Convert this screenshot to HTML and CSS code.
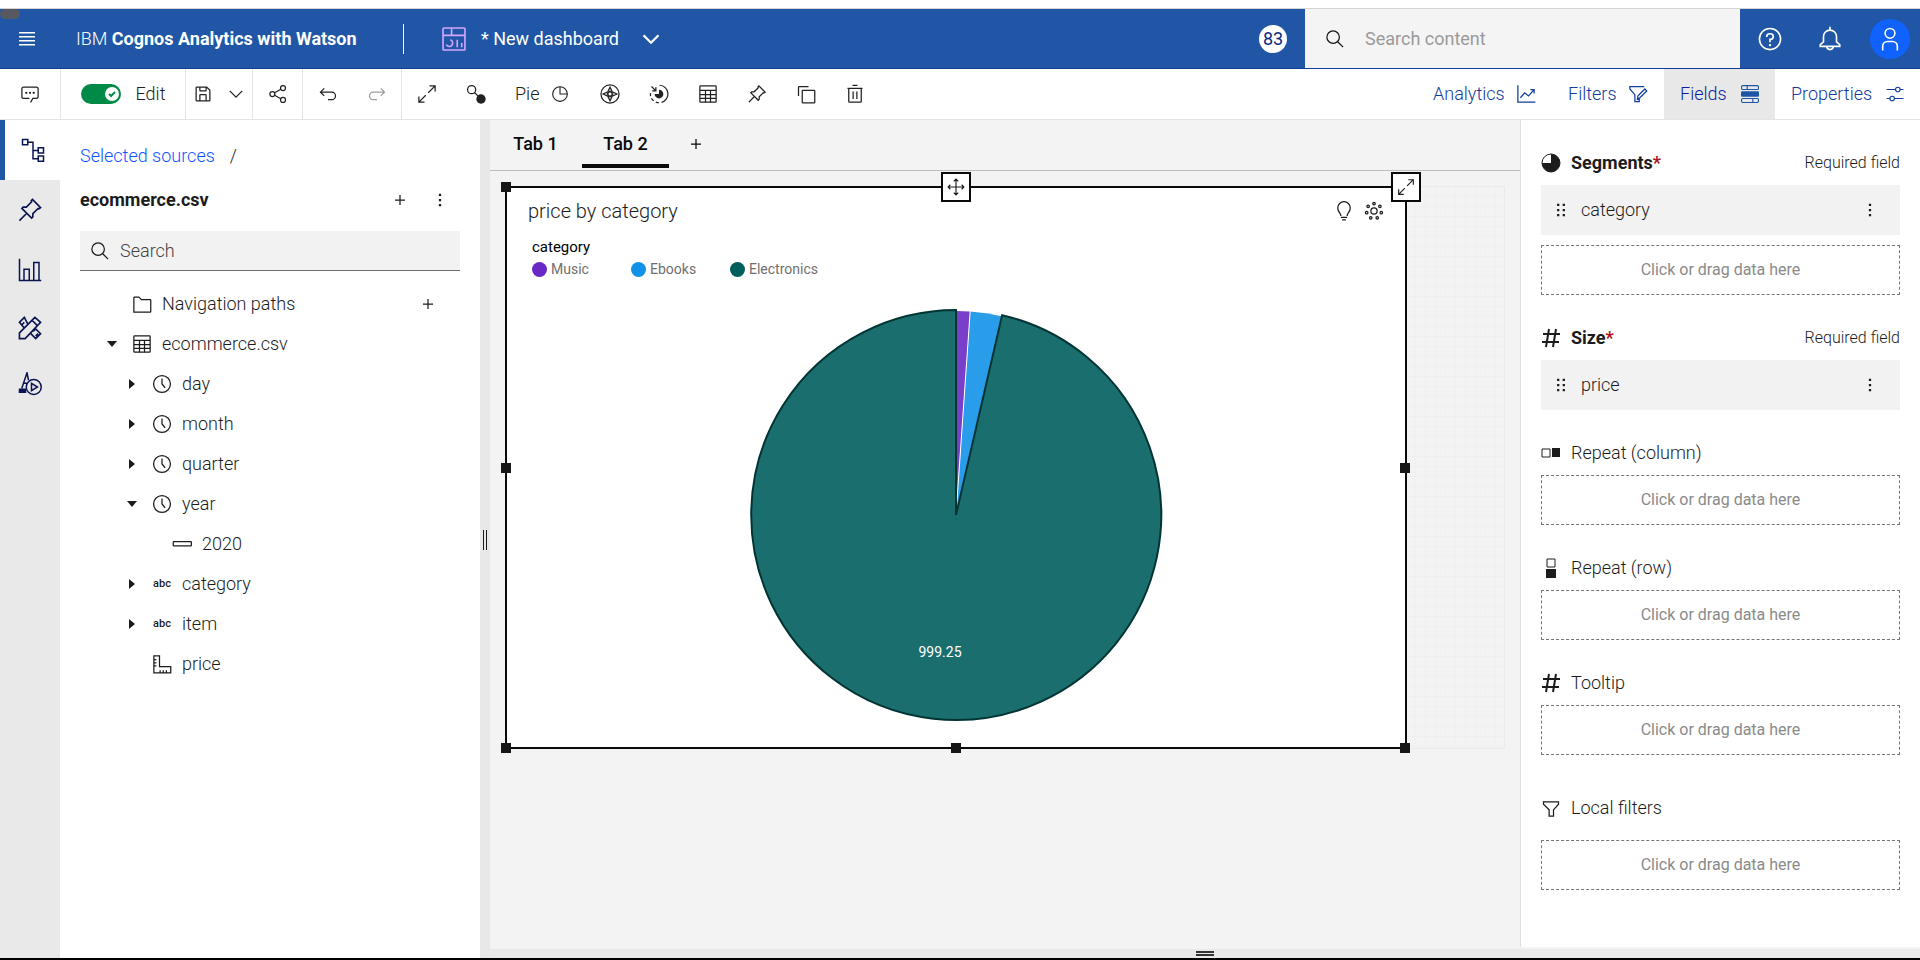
FILE: index.html
```
<!DOCTYPE html>
<html lang="en">
<head>
<meta charset="utf-8">
<title>New dashboard</title>
<link rel="stylesheet" href="styles.css">
</head>
<body>
<svg class="sprite" aria-hidden="true">
  <symbol id="menu" viewBox="0 0 16 16"><path class="solid" d="M0 1h16v1.4H0zM0 5h16v1.4H0zM0 9h16v1.4H0zM0 13h16v1.4H0z"/></symbol>
  <symbol id="dashboard" viewBox="0 0 32 32"><rect x="2.500" y="2.500" width="27" height="27" rx="1"/><path d="M2.500 11.500h27M13 3v8M11.500 17a4.200 4.200 0 1 1-5 6M20 17v9M25.500 21v5"/></symbol>
  <symbol id="chevron" viewBox="0 0 32 32"><path d="M6 11l10 10 10-10"/></symbol>
  <symbol id="search" viewBox="0 0 32 32"><circle cx="13" cy="13" r="10"/><path d="M20.300 20.300L29 29"/></symbol>
  <symbol id="help" viewBox="0 0 32 32"><circle cx="16" cy="16" r="13"/><path d="M12 13.500V13a3.500 3.500 0 0 1 3.500-3.500h1a3.500 3.500 0 0 1 0 7H16V20"/><circle class="solid" cx="16" cy="23.500" r="1.500"/></symbol>
  <symbol id="bell" viewBox="0 0 32 32"><path d="M16 1v4M16 5a8 8 0 0 0-8 8v6.500L4 23v2h24v-2l-4-3.500V13a8 8 0 0 0-8-8zM12 25a4 4 0 0 0 8 0"/></symbol>
  <symbol id="user" viewBox="0 0 32 32"><circle cx="16" cy="9" r="6"/><path d="M7 30v-5a6 6 0 0 1 6-6h6a6 6 0 0 1 6 6v5"/></symbol>
  <symbol id="chat" viewBox="0 0 32 32"><path class="solid" d="M17.740 30L16 29l4-7h6a2 2 0 0 0 2-2V8a2 2 0 0 0-2-2H6a2 2 0 0 0-2 2v12a2 2 0 0 0 2 2h9v2H6a4 4 0 0 1-4-4V8a4 4 0 0 1 4-4h20a4 4 0 0 1 4 4v12a4 4 0 0 1-4 4h-4.840z"/><circle class="solid" cx="10" cy="14" r="1.800"/><circle class="solid" cx="16" cy="14" r="1.800"/><circle class="solid" cx="22" cy="14" r="1.800"/></symbol>
  <symbol id="save" viewBox="0 0 32 32"><path class="solid" d="M27.710 9.290l-5-5A1 1 0 0 0 22 4H6a2 2 0 0 0-2 2v20a2 2 0 0 0 2 2h20a2 2 0 0 0 2-2V10a1 1 0 0 0-.290-.710zM12 6h8v4h-8zm8 20h-8v-8h8zm2 0v-8a2 2 0 0 0-2-2h-8a2 2 0 0 0-2 2v8H6V6h4v4a2 2 0 0 0 2 2h8a2 2 0 0 0 2-2V6.410l4 4V26z"/></symbol>
  <symbol id="share" viewBox="0 0 32 32"><circle cx="7" cy="16" r="4"/><circle cx="24" cy="6.500" r="4"/><circle cx="24" cy="25.500" r="4"/><path d="M10.500 14l10-5.500M10.500 18l10 5.500"/></symbol>
  <symbol id="undo" viewBox="0 0 32 32"><path d="M10 7l-6 6 6 6M4 13h18a6 6 0 0 1 0 12h-6"/></symbol>
  <symbol id="redo" viewBox="0 0 32 32"><path d="M22 7l6 6-6 6M28 13H10a6 6 0 0 0 0 12h6"/></symbol>
  <symbol id="expand" viewBox="0 0 32 32"><path d="M20 3h9v9M29 3L18 14M3 20v9h9M3 29l11-11"/></symbol>
  <symbol id="link" viewBox="0 0 32 32"><circle cx="9" cy="9" r="6.500"/><path d="M13.500 13.500L21 21"/><circle class="solid" cx="24" cy="24" r="7.500"/></symbol>
  <symbol id="pie" viewBox="0 0 32 32"><circle cx="16" cy="16" r="13"/><path d="M16 3v13h13"/></symbol>
  <symbol id="compass" viewBox="0 0 32 32"><circle cx="16" cy="16" r="14.500"/><path d="M16 5l3.500 7.500L27 16l-7.500 3.500L16 27l-3.500-7.500L5 16l7.500-3.500zM16 11.500l4.500 4.500-4.500 4.500-4.500-4.500z"/></symbol>
  <symbol id="explore" viewBox="0 0 32 32"><path d="M17 2a14 14 0 0 1 3 27.500M16 30a14 14 0 0 1-5-1M7.500 27a14 14 0 0 1-3.500-4M2.500 19.500a14 14 0 0 1 0-5M4 4l7 7M11 5v6H5"/><path class="solid" d="M16 9a7 7 0 1 1-7 7h7z"/></symbol>
  <symbol id="table" viewBox="0 0 32 32"><rect x="3" y="3" width="26" height="26" rx="1"/><path d="M3 10h26M3 17h26M3 23h26M12 10v19M20 10v19"/></symbol>
  <symbol id="pin" viewBox="0 0 32 32"><path d="M19 3l10 10-2 1.500-1-.5-6.500 6.500v4L18 26 6 14l1.500-1.500h4L18 6l-.500-1.500zM12 20l-9 9"/></symbol>
  <symbol id="copy" viewBox="0 0 32 32"><rect x="10" y="10" width="20" height="20" rx="1"/><path d="M4 19V5a1 1 0 0 1 1-1h15"/></symbol>
  <symbol id="trash" viewBox="0 0 32 32"><path d="M12 2h8M4 7h24M6 7v21a1 1 0 0 0 1 1h18a1 1 0 0 0 1-1V7M13 12v12M19 12v12"/></symbol>
  <symbol id="analytics" viewBox="0 0 32 32"><path d="M3 2v27h28M7 22l7-8 6 5 9-10M23 9h6v6"/></symbol>
  <symbol id="filteredit" viewBox="0 0 32 32"><path d="M26 4H3v4l8 9v11h7v-5M15 24l1-5L27 8l3 3-11 11z"/></symbol>
  <symbol id="fields" viewBox="0 0 32 32"><rect x="1" y="1" width="30" height="7" rx="2"/><path d="M11 1v7M21 24v7"/><rect class="solid" x="0" y="11" width="32" height="10" rx="2"/><rect x="1" y="24" width="30" height="7" rx="2"/></symbol>
  <symbol id="sliders" viewBox="0 0 32 32"><circle cx="21" cy="8" r="4"/><circle cx="11" cy="24" r="4"/><path d="M1 8h16M25 8h6M1 24h6M15 24h16"/></symbol>
  <symbol id="tree" viewBox="0 0 32 32"><rect x="2" y="2" width="7" height="7"/><rect x="23" y="13" width="7" height="7"/><rect x="23" y="24" width="7" height="7"/><path d="M9 5.500h7v22h7M16 16.500h7"/></symbol>
  <symbol id="chart" viewBox="0 0 32 32"><path d="M2 1v29h29M8 30V15h7v15M21 30V6h7v24"/></symbol>
  <symbol id="tools" viewBox="0 0 32 32"><path d="M3 29v-7L22 3l7 6L10 29zM18.500 6.500l6 6M13.500 11.500L9 3 3 9l6 7M6 12l3-3M20 20l3-3 6 6-6 6-6-6M23 26l3-3"/></symbol>
  <symbol id="media" viewBox="0 0 32 32"><circle cx="21" cy="20" r="10"/><path d="M18 15v10l8-5zM14 11L12 1 5 22M7 15h5"/><path class="solid" d="M1 22h10v6H1z"/></symbol>
  <symbol id="plus" viewBox="0 0 32 32"><path d="M16 8v16M8 16h16"/></symbol>
  <symbol id="dots" viewBox="0 0 32 32"><path class="solid" d="M14 5h4v4h-4zM14 14h4v4h-4zM14 23h4v4h-4z"/></symbol>
  <symbol id="drag" viewBox="0 0 32 32"><path class="solid" d="M9 5h4v4H9zM9 14h4v4H9zM9 23h4v4H9zM19 5h4v4h-4zM19 14h4v4h-4zM19 23h4v4h-4z"/></symbol>
  <symbol id="folder" viewBox="0 0 32 32"><path d="M3 29V6a1 1 0 0 1 1-1h7l4 4h14a1 1 0 0 1 1 1v18a1 1 0 0 1-1 1z"/></symbol>
  <symbol id="clock" viewBox="0 0 32 32"><circle cx="16" cy="16" r="13.500"/><path d="M16 7v9l5 6"/></symbol>
  <symbol id="right" viewBox="0 0 20 20"><path class="solid" d="M7 5l6 5-6 5z"/></symbol>
  <symbol id="down" viewBox="0 0 20 20"><path class="solid" d="M5 7h10l-5 6z"/></symbol>
  <symbol id="member" viewBox="0 0 32 32"><rect x="2" y="12" width="29" height="7" rx="1"/></symbol>
  <symbol id="ruler" viewBox="0 0 32 32"><path d="M3 3h9v17h18v10H3zM3 9h4M3 14h4M3 19h4M13 30v-4M18 30v-4M23 30v-4"/></symbol>
  <symbol id="segments" viewBox="0 0 20 20"><circle cx="10" cy="10" r="9"/><path class="solid" d="M10 1a9 9 0 1 1-9 9h9z"/></symbol>
  <symbol id="hash" viewBox="0 0 20 20"><path d="M8 1L5 19M15 1l-3 18M2 6h17M1 14h17"/></symbol>
  <symbol id="cols" viewBox="0 0 20 20"><path d="M1 6h8v8H1z"/><path class="solid" d="M11 5h8v9h-8z"/></symbol>
  <symbol id="rows" viewBox="0 0 20 20"><path d="M6 1h8v8H6z"/><path class="solid" d="M5 11h10v9H5z"/></symbol>
  <symbol id="filter" viewBox="0 0 32 32"><path d="M4 6h24v4l-8 9v10h-7V19L4 10z"/></symbol>
  <symbol id="move" viewBox="0 0 32 32"><path d="M16 2v28M2 16h28M12 6l4-4 4 4M12 26l4 4 4-4M6 12l-4 4 4 4M26 12l4 4-4 4"/></symbol>
  <symbol id="bulb" viewBox="0 0 32 32"><path d="M11 24c0-5-5-6-5-13a10 10 0 0 1 20 0c0 7-5 8-5 13M11 26h10M13 30h6"/></symbol>
  <symbol id="gear" viewBox="0 0 32 32"><circle cx="16" cy="16" r="5"/><circle cx="16" cy="4" r="2"/><circle cx="25.400" cy="8.500" r="2"/><circle cx="27.700" cy="18.700" r="2"/><circle cx="21.200" cy="26.800" r="2"/><circle cx="10.800" cy="26.800" r="2"/><circle cx="4.300" cy="18.700" r="2"/><circle cx="6.600" cy="8.500" r="2"/></symbol>
</svg>

<div class="app">
  <header class="header">
    <span class="nub"></span>
    <button class="menu-btn" aria-label="Menu"><svg class="i16"><use href="#menu"/></svg></button>
    <div class="brand">IBM <b>Cognos Analytics with Watson</b></div>
    <button class="doc"><svg class="i25 pink"><use href="#dashboard"/></svg><span>* New dashboard</span><svg class="i24 bold"><use href="#chevron"/></svg></button>
    <span class="badge">83</span>
    <label class="head-search"><svg class="i20"><use href="#search"/></svg><input type="text" placeholder="Search content" aria-label="Search content"></label>
    <div class="head-actions">
      <button aria-label="Help"><svg class="i25"><use href="#help"/></svg></button>
      <button aria-label="Notifications"><svg class="i25"><use href="#bell"/></svg></button>
      <button class="avatar" aria-label="Account"><svg class="i25"><use href="#user"/></svg></button>
    </div>
  </header>

  <div class="toolbar">
    <div class="group g-chat"><button class="tool" aria-label="Chat"><svg class="i20"><use href="#chat"/></svg></button></div>
    <div class="group g-edit"><label class="switch"><input type="checkbox" checked><span class="track"><svg viewBox="0 0 14 14"><circle cx="7" cy="7" r="7"/><path d="M4 7l2 2 4-4"/></svg></span>Edit</label></div>
    <div class="group g-save"><button aria-label="Save"><svg class="i20"><use href="#save"/></svg></button><button aria-label="Save options"><svg class="i20"><use href="#chevron"/></svg></button></div>
    <div class="group"><button class="tool" aria-label="Share"><svg class="i20"><use href="#share"/></svg></button></div>
    <div class="group"><button class="tool" aria-label="Undo"><svg class="i20"><use href="#undo"/></svg></button><button class="tool" disabled aria-label="Redo"><svg class="i20"><use href="#redo"/></svg></button></div>
    <div class="group last">
      <button class="tool" aria-label="Expand"><svg class="i20"><use href="#expand"/></svg></button>
      <button class="tool" aria-label="Link"><svg class="i20"><use href="#link"/></svg></button>
      <button class="pie-btn">Pie<svg class="i18"><use href="#pie"/></svg></button>
      <button class="tool" aria-label="Insights"><svg class="i20"><use href="#compass"/></svg></button>
      <button class="tool" aria-label="Explore"><svg class="i20"><use href="#explore"/></svg></button>
      <button class="tool" aria-label="Data table"><svg class="i20"><use href="#table"/></svg></button>
      <button class="tool" aria-label="Pin"><svg class="i20"><use href="#pin"/></svg></button>
      <button class="tool" aria-label="Duplicate"><svg class="i20"><use href="#copy"/></svg></button>
      <button class="tool" aria-label="Delete"><svg class="i20"><use href="#trash"/></svg></button>
    </div>
    <div class="panels">
      <button class="w135">Analytics<svg class="i20"><use href="#analytics"/></svg></button>
      <button class="w112">Filters<svg class="i20"><use href="#filteredit"/></svg></button>
      <button class="w111 on">Fields<svg class="i18"><use href="#fields"/></svg></button>
      <button class="w145">Properties<svg class="i18"><use href="#sliders"/></svg></button>
    </div>
  </div>

  <div class="main">
    <nav class="rail">
      <button class="on" aria-label="Sources"><svg class="i24"><use href="#tree"/></svg></button>
      <button aria-label="Pins"><svg class="i25"><use href="#pin"/></svg></button>
      <button aria-label="Visualizations"><svg class="i24"><use href="#chart"/></svg></button>
      <button class="short" aria-label="Tools"><svg class="i25"><use href="#tools"/></svg></button>
      <button class="short" aria-label="Media"><svg class="i24"><use href="#media"/></svg></button>
    </nav>

    <aside class="sources">
      <div class="crumb"><a href="#">Selected sources</a><span>/</span></div>
      <div class="src-head"><h2>ecommerce.csv</h2><button aria-label="Add source"><svg class="i20"><use href="#plus"/></svg></button><button aria-label="More"><svg class="i18"><use href="#dots"/></svg></button></div>
      <label class="src-search"><svg class="i20"><use href="#search"/></svg><input type="text" placeholder="Search" aria-label="Search"></label>
      <ul class="tree">
        <li><span class="caret"></span><svg class="i20"><use href="#folder"/></svg><span class="name">Navigation paths</span><button aria-label="Add path"><svg class="i20"><use href="#plus"/></svg></button></li>
        <li><svg class="caret"><use href="#down"/></svg><svg class="i20"><use href="#table"/></svg><span class="name">ecommerce.csv</span></li>
        <li class="l1"><svg class="caret"><use href="#right"/></svg><svg class="i20"><use href="#clock"/></svg><span class="name">day</span></li>
        <li class="l1"><svg class="caret"><use href="#right"/></svg><svg class="i20"><use href="#clock"/></svg><span class="name">month</span></li>
        <li class="l1"><svg class="caret"><use href="#right"/></svg><svg class="i20"><use href="#clock"/></svg><span class="name">quarter</span></li>
        <li class="l1"><svg class="caret"><use href="#down"/></svg><svg class="i20"><use href="#clock"/></svg><span class="name">year</span></li>
        <li class="l2"><span class="caret"></span><svg class="i20"><use href="#member"/></svg><span class="name">2020</span></li>
        <li class="l1"><svg class="caret"><use href="#right"/></svg><span class="abc">abc</span><span class="name">category</span></li>
        <li class="l1"><svg class="caret"><use href="#right"/></svg><span class="abc">abc</span><span class="name">item</span></li>
        <li class="l1"><span class="caret"></span><svg class="i20"><use href="#ruler"/></svg><span class="name">price</span></li>
      </ul>
    </aside>
    <div class="resizer"><span></span></div>

    <div class="work">
      <div class="work-top">
        <section class="canvas">
          <div class="tabs"><button>Tab 1</button><button class="on">Tab 2</button><button class="add" aria-label="Add tab"><svg class="i20"><use href="#plus"/></svg></button></div>
          <div class="stage">
            <div class="grid">
              <article class="widget">
                <div class="w-head"><h3>price by category</h3><button aria-label="Insights"><svg class="i20"><use href="#bulb"/></svg></button><button aria-label="Details"><svg class="i20"><use href="#gear"/></svg></button></div>
                <div class="legend">
                  <div class="legend-title">category</div>
                  <ul><li><i class="music"></i>Music</li><li><i class="ebooks"></i>Ebooks</li><li><i class="electronics"></i>Electronics</li></ul>
                </div>
                <svg class="pie-chart" viewBox="-207 -207 414 414" role="img" aria-label="Pie chart of price by category">
                  <path class="s-music" d="M0 0V-204A204 204 0 0 1 14.200 -203.500z"/>
                  <path class="s-ebooks" d="M0 0L14.200 -203.500A204 204 0 0 1 45.900 -198.800z"/>
                  <path class="s-gap" d="M0 0L14.200 -204"/>
                  <path class="s-electronics" d="M0 0L46.100 -199.800A205 205 0 1 1 0 -205z"/>
                  <text x="-16" y="142">999.25</text>
                </svg>
                <span class="handle tl"></span><span class="handle ml"></span><span class="handle bl"></span><span class="handle bm"></span><span class="handle mr"></span><span class="handle br"></span>
                <button class="grip center" aria-label="Move"><svg class="i18"><use href="#move"/></svg></button>
                <button class="grip corner" aria-label="Maximize"><svg class="i18"><use href="#expand"/></svg></button>
              </article>
            </div>
          </div>
        </section>

        <aside class="fields">
          <section><header><svg class="i20"><use href="#segments"/></svg><h4 class="req">Segments<em>*</em></h4><small>Required field</small></header>
            <div class="slot"><svg class="i18"><use href="#drag"/></svg><span>category</span><button aria-label="More"><svg class="i18"><use href="#dots"/></svg></button></div>
            <button class="drop">Click or drag data here</button></section>
          <section><header><svg class="i20 heavy"><use href="#hash"/></svg><h4 class="req">Size<em>*</em></h4><small>Required field</small></header>
            <div class="slot"><svg class="i18"><use href="#drag"/></svg><span>price</span><button aria-label="More"><svg class="i18"><use href="#dots"/></svg></button></div></section>
          <section><header><svg class="i20"><use href="#cols"/></svg><h4>Repeat (column)</h4></header><button class="drop">Click or drag data here</button></section>
          <section><header><svg class="i20"><use href="#rows"/></svg><h4>Repeat (row)</h4></header><button class="drop">Click or drag data here</button></section>
          <section><header><svg class="i20 heavy"><use href="#hash"/></svg><h4>Tooltip</h4></header><button class="drop">Click or drag data here</button></section>
          <section><header class="tall"><svg class="i20 heavy"><use href="#filter"/></svg><h4>Local filters</h4></header><button class="drop">Click or drag data here</button></section>
        </aside>
      </div>
      <div class="tray"><span></span></div>
    </div>
  </div>
</div>
</body>
</html>
```
FILE: styles.css
```
* { box-sizing: border-box; }
body { margin: 0; background: #fff; color: #1c1c1c; font: 300 18px/24px Roboto, "Open Sans", sans-serif; }
button, input { font: inherit; color: inherit; border: 0; background: none; padding: 0; margin: 0; }
button { display: flex; align-items: center; justify-content: center; flex: none; }
h2, h3, h4, ul { margin: 0; padding: 0; font-weight: 300; font-size: 18px; list-style: none; }
svg { fill: none; stroke: currentColor; stroke-width: 2; flex: none; display: block; }
.solid { fill: currentColor; stroke: none; }
.sprite { position: absolute; width: 0; height: 0; }
.i16 { width: 16px; height: 16px; }
.i18 { width: 18px; height: 18px; }
.i20 { width: 20px; height: 20px; }
.i24 { width: 24px; height: 24px; }
.i25 { width: 26px; height: 26px; }
.bold { stroke-width: 3; }
.pink { color: #d4a5ff; }

.app { display: flex; flex-direction: column; min-height: 100vh; padding-top: 8px; border-bottom: 2px solid #000; }

.header { position: relative; display: flex; align-items: stretch; height: 61px; background: #2056a5; color: #fff; border-top: 1px solid #d4d4d4; border-bottom: 1px solid #0c3f93; }
.nub { position: absolute; left: 0; top: 0; width: 20px; height: 10px; border-radius: 5px; background: #565a60; }
.menu-btn { width: 54px; }
.brand { margin-left: 22px; width: 328px; align-self: center; border-right: 1px solid #fff; height: 30px; line-height: 30px; font-size: 18px; white-space: nowrap; }
.brand b { font-weight: 700; }
.doc { margin-left: 37px; gap: 14px; font-weight: 400; }
.doc .bold { margin-left: 6px; }
.badge { align-self: center; margin-left: auto; margin-right: 18px; width: 28px; height: 28px; border-radius: 50%; background: #fff; color: #0a2a80; text-align: center; line-height: 28px; font-weight: 400; }
.head-search { display: flex; align-items: center; width: 435px; padding-left: 20px; gap: 20px; background: #f4f4f4; color: #161616; }
.head-search input { flex: 1; min-width: 0; height: 40px; }
.head-search input::placeholder { color: #9a9a9a; opacity: 1; font-weight: 400; }
.head-actions { display: flex; width: 180px; }
.head-actions button { width: 60px; }
.head-actions .avatar { width: 40px; height: 40px; margin: auto; border-radius: 50%; background: #0f62fe; }

.toolbar { display: flex; height: 51px; border-bottom: 1px solid #e4e4e4; color: #222; }
.group { display: flex; border-right: 1px solid #e4e4e4; }
.group.last { border-right: 0; }
.tool { width: 49px; }
.tool:disabled { color: #9c9c9c; }
.g-chat { width: 61px; justify-content: center; }
.g-edit { width: 125px; justify-content: center; }
.g-save { width: 67px; justify-content: center; gap: 13px; }
.switch { display: flex; align-items: center; gap: 15px; }
.switch input { position: absolute; opacity: 0; }
.track { width: 40px; height: 20px; border-radius: 10px; background: #008a45; padding: 3px 2px; display: flex; justify-content: flex-end; }
.track svg { width: 14px; height: 14px; stroke: #008a45; }
.track circle { fill: #fff; stroke: none; }
.pie-btn { gap: 12px; padding: 0 16px 0 15px; }
.panels { display: flex; margin-left: auto; color: #123c9c; }
.panels button { justify-content: space-between; padding: 0 16px; }
.panels .on { background: #e8e8e8; color: #0a1fa0; }
.panels .on svg { color: #1d54a6; }
.w111 { width: 111px; }
.w112 { width: 112px; }
.w135 { width: 135px; }
.w145 { width: 145px; }

.main { display: flex; flex: 1; }
.rail { width: 60px; background: #e9e9e9; color: #0a1450; }
.rail button { width: 100%; height: 60px; }
.rail .short { height: 56px; }
.rail .on { background: #fff; border-left: 5px solid #1f57a6; }
.sources { width: 420px; padding: 24px 20px 0; }
.crumb { display: flex; gap: 15px; }
.crumb a { color: #0f55fe; text-decoration: none; }
.src-head { display: flex; align-items: center; height: 40px; margin: 12px 0 11px; }
.src-head h2 { flex: 1; font-weight: 700; }
.src-head button { width: 40px; height: 40px; }
.src-search { display: flex; align-items: center; gap: 10px; height: 40px; padding-left: 10px; background: #f2f2f2; border-bottom: 1px solid #6f6f6f; }
.src-search input { flex: 1; min-width: 0; height: 36px; }
.src-search input::placeholder { color: #444; opacity: 1; }
.tree { margin-top: 13px; }
.tree li { display: flex; align-items: center; gap: 10px; height: 40px; padding-left: 22px; }
.tree .l1 { padding-left: 42px; }
.tree .l2 { padding-left: 62px; }
.caret { width: 20px; height: 20px; flex: none; }
.name { flex: 1; }
.abc { width: 20px; font-weight: 500; font-size: 11px; line-height: 20px; text-align: center; }
.tree button { width: 24px; height: 24px; margin-right: 20px; }
.resizer { width: 10px; background: #e8e8e8; display: flex; justify-content: center; }
.resizer span { width: 4px; height: 20px; border: solid #161616; border-width: 0 1px; margin-top: 410px; }

.work { flex: 1; min-width: 0; display: flex; flex-direction: column; background: #f3f3f3; }
.work-top { flex: 1; display: flex; }
.tray { height: 9px; background: #e9e9e9; display: flex; justify-content: center; align-items: center; }
.tray span { width: 18px; height: 5px; border: solid #333; border-width: 2px 0; }
.canvas { flex: 1; min-width: 0; }
.tabs { display: flex; gap: 3px; height: 51px; padding: 0 2px; border-bottom: 1px solid #bdbdbd; font-weight: 500; color: #0a0a0a; }
.tabs button { width: 87px; height: 48px; border: solid transparent; border-width: 4px 0; }
.tabs .on { border-bottom-color: #0a0a0a; }
.tabs .add { width: 48px; }
.stage { padding: 15px 15px 0; }
.grid { background: repeating-linear-gradient(#efefef 0 1px, transparent 1px 10px), repeating-linear-gradient(90deg, #f0f0f0 0 1px, transparent 1px 10px); box-shadow: inset 0 0 0 1px #eaeaea; }
.widget { position: relative; width: calc(90% + 2px); min-width: 600px; height: 563px; border: 2px solid #0a0a0a; background: #fff; padding: 8px 22px 0 21px; }
.w-head { display: flex; align-items: center; height: 30px; margin-right: -6px; }
.w-head h3 { flex: 1; font-size: 20px; }
.w-head button { width: 30px; }
.legend { margin: 10px 0 0 4px; font-size: 15px; line-height: 22px; }
.legend-title { color: #000; font-weight: 400; }
.legend ul { display: flex; }
.legend li { display: flex; align-items: center; gap: 4px; width: 99px; font-size: 14px; font-weight: 400; color: #6f6f6f; white-space: nowrap; }
.legend i { width: 15px; height: 15px; border-radius: 50%; flex: none; }
.music { background: #6929c4; }
.ebooks { background: #1192e8; }
.electronics { background: #005d5d; }
.pie-chart { width: 414px; height: 414px; margin: 28px auto 0; }
.s-music { fill: #7a3fca; stroke: none; }
.s-ebooks { fill: #299cea; stroke: none; }
.s-gap { stroke: #fff; stroke-width: 1; }
.s-electronics { fill: #1b6e6e; stroke: #023434; }
.pie-chart text { fill: #fff; stroke: none; font-size: 14px; font-weight: 400; text-anchor: middle; }
.handle { position: absolute; width: 10px; height: 10px; background: #161616; }
.tl, .ml, .bl { left: -6px; }
.mr, .br { right: -5px; }
.tl { top: -6px; }
.bl, .bm, .br { bottom: -6px; }
.ml, .mr { top: calc(50% - 5px); }
.bm { left: calc(50% - 5px); }
.grip { position: absolute; top: -16px; width: 30px; height: 30px; background: #fff; border: 2px solid #0a0a0a; }
.center { left: calc(50% - 15px); }
.corner { right: -16px; }

.fields { width: 400px; margin-bottom: 2px; background: #fff; border-left: 1px solid #e0e0e0; padding: 0 20px; }
.fields section { padding-top: 21px; }
.fields header { display: flex; align-items: center; gap: 10px; height: 44px; }
.fields header.tall { height: 64px; }
.fields h4 { flex: 1; }
.fields .req { font-weight: 700; }
.req em { font-style: normal; color: #b01018; }
.fields small { font-size: 16px; }
.fields header svg { stroke-width: 1; }
.fields header .heavy { stroke-width: 2; }
.slot { display: flex; align-items: center; height: 50px; padding: 0 10px 0 11px; gap: 11px; background: #f2f2f2; }
.slot span { flex: 1; }
.slot button { width: 40px; height: 40px; }
.drop { width: 100%; height: 50px; border: 1px dashed #767676; color: #8a8a8a; font-size: 16px; font-weight: 400; }
.slot + .drop { margin-top: 10px; }
```
